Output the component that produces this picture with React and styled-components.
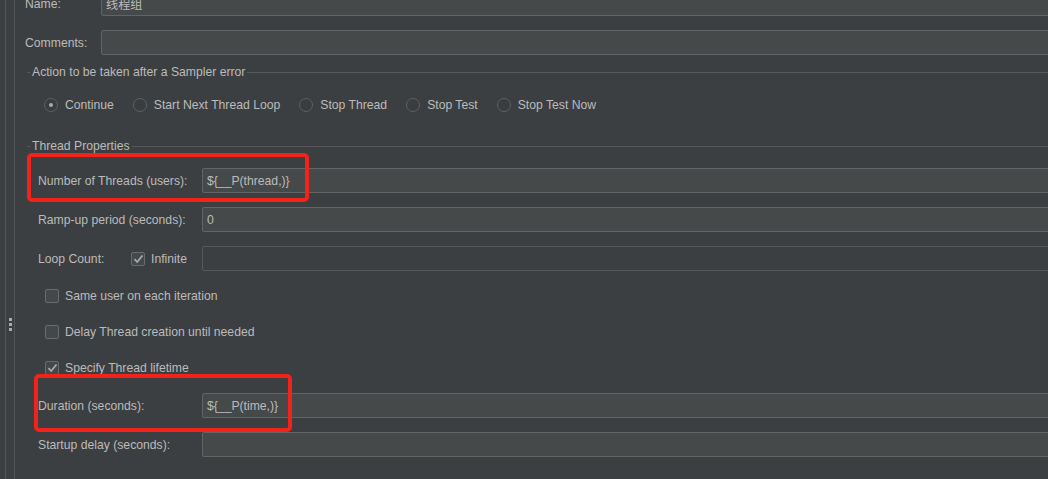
import React from 'react';
import styled, { createGlobalStyle } from 'styled-components';

const Global = createGlobalStyle`
  html, body { margin: 0; padding: 0; background: #3c3f41; overflow: hidden; }
  body { font-family: "Liberation Sans", Arial, "Noto Sans CJK SC", sans-serif; }
  * { box-sizing: border-box; }
`;

const Root = styled.div`
  display: flex;
  width: 1048px;
  height: 479px;
  overflow: hidden;
  background: #3c3f41;
  color: #bbbbbb;
  font-size: 12.2px;
`;

const Splitter = styled.div`
  flex: 0 0 10px;
  margin-left: 5px;
  height: 100%;
  border-left: 1px solid #535658;
  border-right: 1px solid #535658;
  display: flex;
  flex-direction: column;
  align-items: center;
  gap: 2px;
  padding-top: 318px;
`;

const Dot = styled.span`
  width: 3px;
  height: 3px;
  background: #a9abad;
`;

const Content = styled.div`
  flex: 0 0 1080px;
  display: flex;
  flex-direction: column;
  padding-left: 10px;
  margin-top: -9px;
`;

const Row = styled.div`
  position: relative;
  display: flex;
  align-items: center;
  height: 25px;
  margin-top: ${(p) => p.$mt || 0}px;
  padding-left: ${(p) => p.$pl || 0}px;
`;

const Label = styled.span`
  flex: 0 0 ${(p) => p.$w}px;
  white-space: nowrap;
`;

const Field = styled.div`
  flex: 1;
  height: 25px;
  display: flex;
  align-items: center;
  padding-left: 4px;
  background: ${(p) => (p.$disabled ? '#3c3f41' : '#45494a')};
  border: 1px solid ${(p) => (p.$disabled ? '#56595b' : '#646464')};
  border-radius: 2px;
  color: #bbbbbb;
  white-space: nowrap;
`;

const Section = styled.div`
  display: flex;
  flex-direction: column;
  margin-left: 2px;
`;

const Title = styled.div`
  display: flex;
  align-items: center;
  gap: 2px;
  height: 14px;
  margin-top: ${(p) => p.$mt}px;
  &::before {
    content: '';
    width: 3px;
    height: 1px;
    background: #58595b;
  }
  &::after {
    content: '';
    flex: 1;
    height: 1px;
    background: #58595b;
  }
`;

const RadioRow = styled.div`
  display: flex;
  align-items: center;
  gap: 19px;
  height: 18px;
  margin-top: 17px;
  padding-left: 17px;
`;

const Option = styled.label`
  display: flex;
  align-items: center;
  gap: 7px;
  white-space: nowrap;
`;

const Radio = styled.span`
  position: relative;
  width: 14px;
  height: 14px;
  border-radius: 50%;
  border: 1px solid #5d6062;
  background: #3a3d3f;
  &::after {
    content: '';
    display: ${(p) => (p.$on ? 'block' : 'none')};
    position: absolute;
    left: 4px;
    top: 4px;
    width: 4px;
    height: 4px;
    border-radius: 50%;
    background: #a7a9ab;
  }
`;

const Box = styled.span`
  flex: 0 0 14px;
  width: 14px;
  height: 14px;
  border: 1px solid #6b6b6b;
  border-radius: 2px;
  background: #43494a;
  display: flex;
  align-items: center;
  justify-content: center;
`;

const CheckRow = styled.div`
  display: flex;
  align-items: center;
  gap: 6px;
  height: 36px;
  padding-left: 18px;
  margin-top: ${(p) => p.$mt || 0}px;
`;

const LoopCheck = styled.label`
  flex: 0 0 71px;
  display: flex;
  align-items: center;
  gap: 6px;
`;

const Mark = styled.div`
  position: absolute;
  left: ${(p) => p.$l}px;
  top: ${(p) => p.$t}px;
  width: ${(p) => p.$w}px;
  height: ${(p) => p.$h}px;
  border: 4px solid #f2231b;
  border-radius: 5px;
  pointer-events: none;
`;

const Tick = () => (
  <svg width="11" height="10" viewBox="0 0 11 10">
    <polyline points="1.5,5.2 4.2,8 9.5,1.5" fill="none" stroke="#a9abad" strokeWidth="1.8" />
  </svg>
);

const Check = ({ on }) => <Box>{on && <Tick />}</Box>;

const radios = ['Continue', 'Start Next Thread Loop', 'Stop Thread', 'Stop Test', 'Stop Test Now'];

export default function App() {
  return (
    <Root>
      <Global />
      <Splitter>
        <Dot />
        <Dot />
        <Dot />
      </Splitter>
      <Content>
        <Row>
          <Label $w={76}>Name:</Label>
          <Field>线程组</Field>
        </Row>
        <Row $mt={14}>
          <Label $w={76}>Comments:</Label>
          <Field />
        </Row>
        <Section>
          <Title $mt={10}>Action to be taken after a Sampler error</Title>
          <RadioRow>
            {radios.map((r, i) => (
              <Option key={r}>
                <Radio $on={i === 0} />
                {r}
              </Option>
            ))}
          </RadioRow>
          <Title $mt={25}>Thread Properties</Title>
          <Row $mt={15} $pl={11}>
            <Label $w={164}>Number of Threads (users):</Label>
            <Field>{'${__P(thread,)}'}</Field>
            <Mark $l={0} $t={-15} $w={282} $h={49} />
          </Row>
          <Row $mt={14} $pl={11}>
            <Label $w={164}>Ramp-up period (seconds):</Label>
            <Field>0</Field>
          </Row>
          <Row $mt={14} $pl={11}>
            <Label $w={93}>Loop Count:</Label>
            <LoopCheck>
              <Check on />
              Infinite
            </LoopCheck>
            <Field $disabled />
          </Row>
          <CheckRow $mt={7}>
            <Check />
            Same user on each iteration
          </CheckRow>
          <CheckRow>
            <Check />
            Delay Thread creation until needed
          </CheckRow>
          <CheckRow>
            <Check on />
            Specify Thread lifetime
          </CheckRow>
          <Row $mt={7} $pl={11}>
            <Label $w={164}>Duration (seconds):</Label>
            <Field>{'${__P(time,)}'}</Field>
            <Mark $l={7} $t={-19} $w={258} $h={58} />
          </Row>
          <Row $mt={14} $pl={11}>
            <Label $w={164}>Startup delay (seconds):</Label>
            <Field />
          </Row>
        </Section>
      </Content>
    </Root>
  );
}
